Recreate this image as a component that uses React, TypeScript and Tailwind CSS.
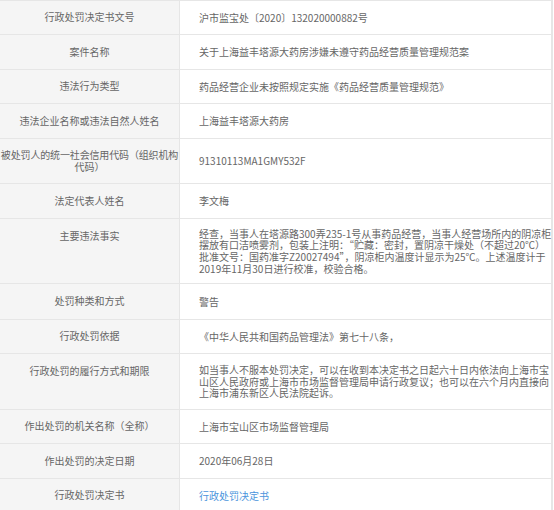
import React from 'react';

type Row = {
  label: React.ReactNode;
  value: React.ReactNode;
  h: string;
  top?: boolean;
  link?: boolean;
};

const rows: Row[] = [
  { label: '行政处罚决定书文号', value: '沪市监宝处〔2020〕132020000882号', h: 'h-[34px]' },
  { label: '案件名称', value: '关于上海益丰塔源大药房涉嫌未遵守药品经营质量管理规范案', h: 'h-[35px]' },
  { label: '违法行为类型', value: '药品经营企业未按照规定实施《药品经营质量管理规范》', h: 'h-[34px]' },
  { label: '违法企业名称或违法自然人姓名', value: '上海益丰塔源大药房', h: 'h-[35px]' },
  {
    label: (
      <>
        <div className="tracking-[-0.15px]">被处罚人的统一社会信用代码（组织机构</div>
        <div>代码）</div>
      </>
    ),
    value: '91310113MA1GMY532F',
    h: 'h-[45px]',
  },
  { label: '法定代表人姓名', value: '李文梅', h: 'h-[35px]' },
  {
    label: '主要违法事实',
    value: [
      '经查，当事人在塔源路300弄235-1号从事药品经营，当事人经营场所内的阴凉柜',
      '摆放有口洁喷雾剂，包装上注明：“贮藏：密封，置阴凉干燥处（不超过20℃）',
      '批准文号：国药准字Z20027494”，阴凉柜内温度计显示为25℃。上述温度计于',
      '2019年11月30日进行校准，校验合格。',
    ],
    h: 'h-[65px]',
    top: true,
  },
  { label: '处罚种类和方式', value: '警告', h: 'h-[36px]' },
  { label: '行政处罚依据', value: '《中华人民共和国药品管理法》第七十八条，', h: 'h-[34px]' },
  {
    label: '行政处罚的履行方式和期限',
    value: [
      '如当事人不服本处罚决定，可以在收到本决定书之日起六十日内依法向上海市宝',
      '山区人民政府或上海市市场监督管理局申请行政复议；也可以在六个月内直接向',
      '上海市浦东新区人民法院起诉。',
    ],
    h: 'h-[56px]',
    top: true,
  },
  { label: '作出处罚的机关名称（全称）', value: '上海市宝山区市场监督管理局', h: 'h-[34px]' },
  { label: '作出处罚的决定日期', value: '2020年06月28日', h: 'h-[35px]' },
  { label: '行政处罚决定书', value: '行政处罚决定书', h: 'h-[34px]', link: true },
];

export default function App() {
  return (
    <div
      className="w-[553px] bg-white text-[10px] text-[#666]"
      style={{ fontFamily: '"Noto Sans CJK SC", "Noto Sans", sans-serif' }}
    >
      <div className="border-t border-r-2 border-[#e6e6e6]">
        {rows.map((r, i) => (
          <div key={i} className={`flex border-b border-[#e6e6e6] ${r.h}`}>
            {/* 标签列 */}
            <div
              className={`w-[180px] shrink-0 flex justify-center text-center whitespace-nowrap bg-[#f5f5f5] border-r border-[#e6e6e6] leading-[12.5px] ${
                r.top ? 'items-start pt-[11px]' : 'items-center'
              }`}
            >
              <div>{r.label}</div>
            </div>
            {/* 内容列 */}
            <div className="flex-1 flex items-center pl-[19px] leading-[11.6px] whitespace-nowrap">
              {Array.isArray(r.value) ? (
                <div>
                  {r.value.map((line, j) => (
                    <div key={j}>{line}</div>
                  ))}
                </div>
              ) : r.link ? (
                <span className="text-[#4a94dc]">{r.value}</span>
              ) : (
                <span>{r.value}</span>
              )}
            </div>
          </div>
        ))}
      </div>
    </div>
  );
}
